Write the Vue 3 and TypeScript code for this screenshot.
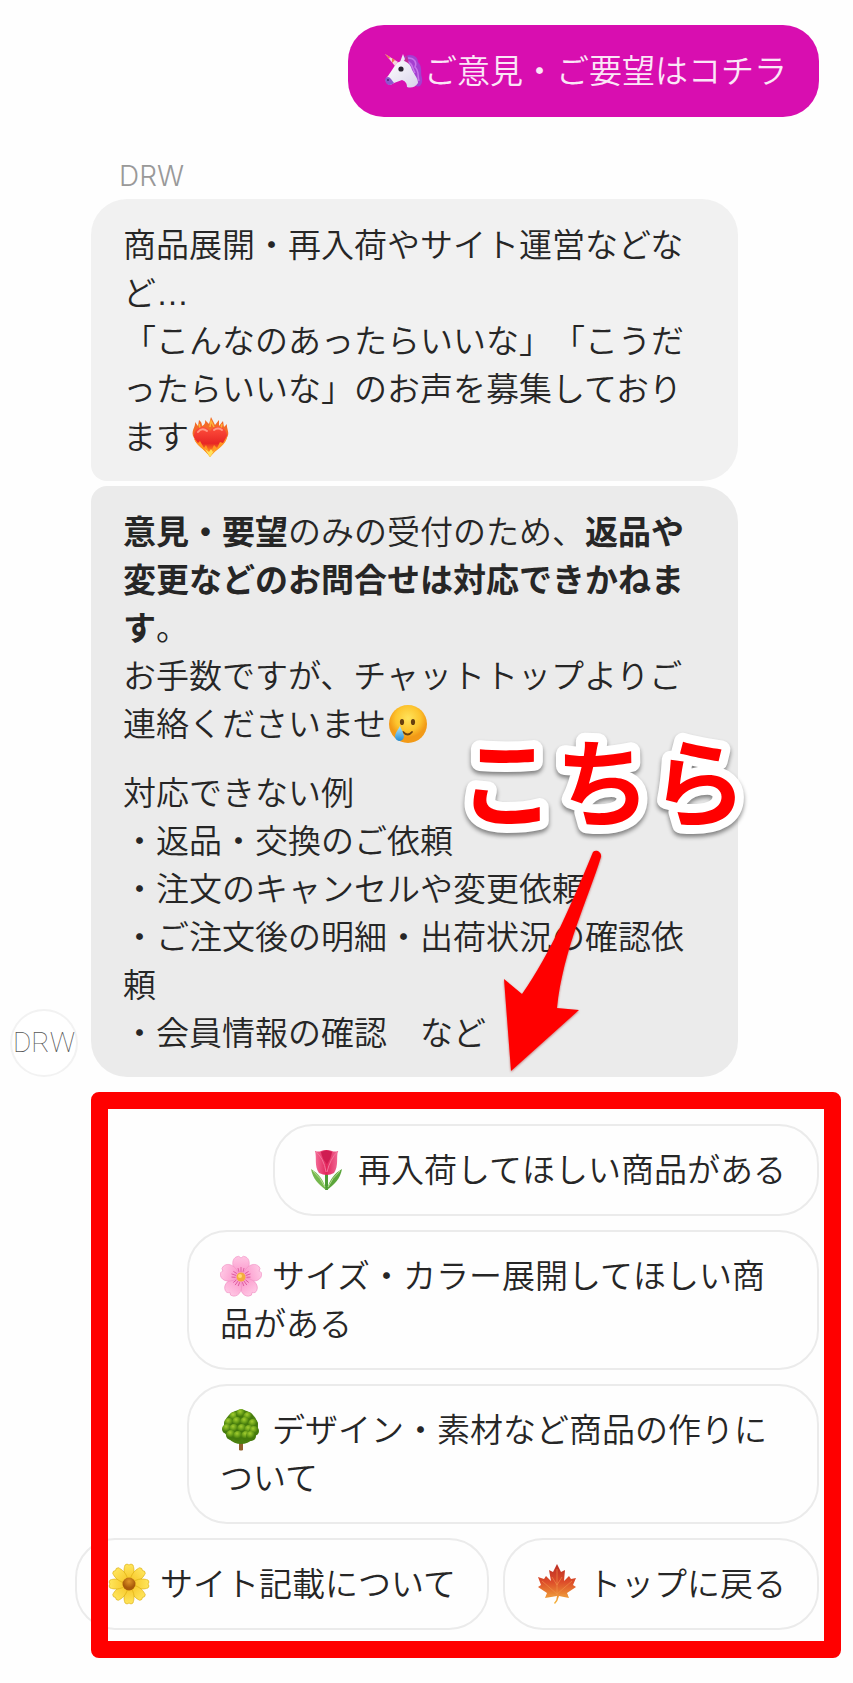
<script setup lang="ts">
import { defineComponent, h } from 'vue'

type IconName = 'unicorn' | 'heart' | 'face' | 'tulip' | 'blossom' | 'tree' | 'daisy' | 'maple'

interface Reply {
  icon: IconName
  label: string
}

const replies: Reply[] = [
  { icon: 'tulip', label: '再入荷してほしい商品がある' },
  { icon: 'blossom', label: 'サイズ・カラー展開してほしい商品がある' },
  { icon: 'tree', label: 'デザイン・素材など商品の作りについて' },
  { icon: 'daisy', label: 'サイト記載について' },
  { icon: 'maple', label: 'トップに戻る' },
]

const daisyPetals = Array.from({ length: 8 }, (_, i) =>
  `<path d="M21 20C14 12 16 5 17 2Q19 0 21 2Q23 0 25 2C26 5 28 12 21 20Z" fill="url(#dy)" stroke="#d9a90d" stroke-width=".6" transform="rotate(${i * 45} 21 21)"/>`,
).join('')

const blossomPetals = Array.from({ length: 5 }, (_, i) =>
  `<g transform="rotate(${i * 72} 21 22)"><path d="M21 21C11 14 11 5 16 2Q19 0 21 3Q23 0 26 2C31 5 31 14 21 21Z" fill="url(#bl)" stroke="#f08fc3" stroke-width=".6"/><path d="M21 17V12M19 17L18 13M23 17L24 13" stroke="#d6458f" stroke-width=".7" fill="none"/></g>`,
).join('')

const leafClumps = [
  [14, 8], [21, 5], [28, 8], [9, 14], [17, 13], [25, 13], [33, 15], [7, 20],
  [14, 20], [22, 20], [29, 21], [34, 22], [11, 26], [18, 27], [26, 27], [31, 27],
].map(([x, y]) => `<circle cx="${x}" cy="${y}" r="5" fill="url(#tr)"/>`).join('')

const art: Record<IconName, string> = {
  unicorn: `
    <defs><linearGradient id="un" x2="1" y2="1"><stop stop-color="#fff"/><stop offset="1" stop-color="#d9d3ea"/></linearGradient></defs>
    <path d="M21 8C28 2 36 6 36 12C41 17 38 22 40 28C41 34 38 38 34 36L23 17Z" fill="#a43fd0"/>
    <path d="M26 8C33 8 35 13 33 17C38 22 35 26 37 31M24 11C31 13 30 18 33 23" fill="none" stroke="#c872ea" stroke-width="1.5"/>
    <path d="M18 12L21 4L24 12Z" fill="#eee4f4"/><path d="M22 11L25 5L27 14Z" fill="#c22a99"/>
    <path d="M12 17C16 9 26 10 29 17C31 24 36 27 36 33Q32 39 25 37C25 33 23 31 20 30L12 33Q7 37 4 32Q3 29 6 26Z" fill="url(#un)"/>
    <path d="M3 29Q6 25 9 29L12 33Q7 37 4 33Z" fill="#8f55cf"/>
    <path d="M3 4L16 12L13 16Z" fill="#f5d3dc"/><path d="M3 4L8 7L7 9ZM10 8L13 10L10 13Z" fill="#ed7a50"/>
    <circle cx="19" cy="19" r="2.6" fill="#29232f"/><circle cx="6" cy="30" r="1" fill="#4d2470"/>`,
  heart: `
    <defs><linearGradient id="he" y2="1" x2="0"><stop stop-color="#ff503c"/><stop offset=".55" stop-color="#e82625"/><stop offset=".8" stop-color="#ff851c"/><stop offset="1" stop-color="#ffdc39"/></linearGradient></defs>
    <path d="M5 22C1 15 7 11 6 6L9 10L10 4Q13 6 13 10Q17 8 16 4L20 8L22 1L26 9L30 4V10L34 5L35 11L38 8C37 13 42 17 37 23Z" fill="#f36a28"/>
    <path d="M21 11L22 5L25 11M11 12L10 8M32 12L33 8" fill="none" stroke="#ffb238" stroke-width="1.5"/>
    <path d="M21 15C15 7 4 12 5 21C6 29 16 33 21 41C26 33 37 29 38 20C38 11 27 7 21 15Z" fill="url(#he)"/>
    <path d="M5 22L9 27L11 25L15 32L17 29L21 38L25 29L28 32L31 26L34 27L38 20C38 29 27 33 21 41C16 33 6 29 5 22Z" fill="#ff9623"/>
    <path d="M16 33L20 36L22 33L24 36L27 32L21 41Z" fill="#ffe25a"/>
    <path d="M9 16Q13 11 18 15M25 14Q29 11 33 14" stroke="#ff9784" stroke-width="2" fill="none" stroke-linecap="round"/>`,
  face: `
    <defs><radialGradient id="fa" cy=".35"><stop stop-color="#ffe45c"/><stop offset=".65" stop-color="#fdc52e"/><stop offset="1" stop-color="#f29a17"/></radialGradient><linearGradient id="te" x2="0" y2="1"><stop stop-color="#b2e9ff"/><stop offset="1" stop-color="#258ed7"/></linearGradient></defs>
    <circle cx="22" cy="21" r="19" fill="url(#fa)"/>
    <ellipse cx="16" cy="19" rx="2.1" ry="3.1" fill="#68400e"/><ellipse cx="27" cy="19" rx="2.1" ry="3.1" fill="#68400e"/>
    <path d="M17 29Q22 34 26 29" fill="none" stroke="#68400e" stroke-width="1.8" stroke-linecap="round"/>
    <path d="M14 23C12 27 9 30 9 34Q10 38 14 38Q18 37 18 33C17 28 15 26 14 23Z" fill="url(#te)"/>`,
  tulip: `
    <defs><linearGradient id="tu" x2="1" y2="0"><stop stop-color="#f46d99"/><stop offset=".5" stop-color="#e3265c"/><stop offset="1" stop-color="#f06a97"/></linearGradient></defs>
    <path d="M19 25H22V41H19Z" fill="#4d9b36"/>
    <path d="M20 41C18 31 12 24 5 20C7 30 12 35 20 41Z" fill="#76b84e"/>
    <path d="M21 41C23 31 29 24 36 20C34 30 29 35 21 41Z" fill="#5ba53b"/>
    <path d="M7 22Q15 29 19 38M34 22Q26 29 22 38" stroke="#b7dd91" fill="none"/>
    <path d="M9 2Q13 3 15 2Q20 0 26 2Q28 3 32 2C30 8 33 17 28 24Q21 28 13 24C8 17 11 9 9 2Z" fill="url(#tu)"/>
    <path d="M15 3Q21 0 26 3Q25 10 21 15Q16 10 15 3Z" fill="#cf1d52"/>
    <path d="M9 2Q18 9 20 23M32 2Q24 10 21 23" stroke="#f2769c" fill="none"/>`,
  blossom: `
    <defs><linearGradient id="bl" x2="0" y2="1"><stop stop-color="#ffc7e4"/><stop offset="1" stop-color="#fa92c8"/></linearGradient></defs>
    ${blossomPetals}<circle cx="21" cy="22" r="4.5" fill="#f4ac3e"/><circle cx="20" cy="21" r="2" fill="#ffda75"/>`,
  tree: `
    <defs><radialGradient id="tr" cx=".4" cy=".25"><stop stop-color="#a3cd30"/><stop offset=".6" stop-color="#699f18"/><stop offset="1" stop-color="#447a0c"/></radialGradient></defs>
    <path d="M19 29H23V41Q21 42 19 41Z" fill="#92602c"/>
    <circle cx="21" cy="18" r="17" fill="#4b800f"/>${leafClumps}`,
  daisy: `
    <defs><linearGradient id="dy" x2="0" y2="1"><stop stop-color="#ffe65d"/><stop offset="1" stop-color="#f6c321"/></linearGradient><radialGradient id="dc" cy=".3"><stop stop-color="#e19628"/><stop offset="1" stop-color="#a95a0a"/></radialGradient></defs>
    ${daisyPetals}<circle cx="21" cy="21" r="6.5" fill="url(#dc)"/>`,
  maple: `
    <defs><linearGradient id="ma" x2="0" y2="1"><stop stop-color="#bb2c24"/><stop offset=".45" stop-color="#dd4d2a"/><stop offset="1" stop-color="#f5b83b"/></linearGradient></defs>
    <path d="M21 1L25 9L29 7L28 18L33 13L35 16L40 15L37 22L40 24L31 30L33 35L23 33Q22 38 19 41L18 40Q21 37 21 33L9 35L11 30L2 24L5 22L2 14L8 16L10 13L15 18L13 7L17 9Z" fill="url(#ma)"/>
    <path d="M21 33V6M21 31L6 18M21 31L36 18M21 32L11 32M21 32L32 32M21 22L16 14M21 22L26 14" fill="none" stroke="#f0944a" stroke-width=".6"/>`,
}

const Emoji = defineComponent({
  props: { name: { type: String, required: true } },
  setup(props) {
    return () =>
      h('svg', {
        viewBox: '0 0 42 42',
        'aria-hidden': 'true',
        innerHTML: art[props.name as IconName],
      })
  },
})
</script>

<template>
  <main class="chat">
    <div class="bubble sent"><Emoji name="unicorn" class="emoji" />ご意見・ご要望はコチラ</div>

    <section class="received" aria-label="DRW">
      <div class="avatar" aria-hidden="true">DRW</div>
      <div class="thread">
        <p class="sender">DRW</p>
        <div class="bubble first">
          商品展開・再入荷やサイト運営などなど…<br />「こんなのあったらいいな」「こうだったらいいな」のお声を募集しております<Emoji name="heart" class="emoji" />
        </div>
        <div class="bubble last">
          <p><b>意見・要望</b>のみの受付のため、<b>返品や変更などのお問合せは対応できかねます</b>。<br />お手数ですが、チャットトップよりご連絡くださいませ<Emoji name="face" class="emoji" /></p>
          <p>対応できない例<br />・返品・交換のご依頼<br />・注文のキャンセルや変更依頼<br />・ご注文後の明細・出荷状況の確認依頼<br />・会員情報の確認　など</p>
          <svg class="callout" viewBox="0 0 290 400">
            <text class="callout-text" x="14" y="99">こちら</text>
            <path
              class="callout-arrow"
              d="M148 132C151 129 157 132 156 137C143 179 118 230 112 288L134 290L66 351L59 259L77 274C105 235 129 178 148 132Z"
            />
          </svg>
        </div>
      </div>
    </section>

    <section class="replies">
      <button v-for="reply in replies" :key="reply.icon" type="button" class="reply">
        <Emoji :name="reply.icon" class="emoji spaced" />{{ reply.label }}
      </button>
      <div class="frame"></div>
    </section>
  </main>
</template>

<style>
body {
  margin: 0;
  background: #fefefe;
}
</style>

<style scoped>
.chat {
  padding: 25px 34px 54px 10px;
  overflow: hidden;
  color: #262626;
  font-family: "Liberation Sans", "Noto Sans CJK JP", sans-serif;
  font-size: 33px;
  font-weight: 350;
  line-height: 48px;
  line-break: loose;
  word-break: break-all;
  text-spacing-trim: space-all;
}

p {
  margin: 0;
}

.bubble {
  box-sizing: border-box;
  padding: 23px 33px 19px 32px;
  border-radius: 36px;
}

.sent {
  width: fit-content;
  margin-left: auto;
  padding: 23px 32px 21px 34px;
  background: #d80eb0;
  color: #fbe6f7;
}

.emoji {
  display: inline-block;
  width: 42px;
  height: 42px;
  vertical-align: -9px;
}

.spaced {
  margin-right: 10px;
}

.received {
  display: flex;
  align-items: flex-end;
  gap: 13px;
  margin-top: 43px;
}

.avatar {
  box-sizing: border-box;
  flex: none;
  display: flex;
  align-items: center;
  justify-content: center;
  width: 68px;
  height: 68px;
  border: 2px solid #f2f2f2;
  border-radius: 50%;
  background: #fff;
  color: #555;
  font-family: "Liberation Sans Narrow", Roboto, sans-serif;
  font-size: 28px;
  font-weight: 100;
  word-break: normal;
}

.thread {
  flex: 1;
  max-width: 647px;
}

.sender {
  margin: 0 0 7px 28px;
  color: #999;
  font-family: Inter, sans-serif;
  font-size: 28px;
  font-weight: 350;
  line-height: 32px;
}

.first {
  border-bottom-left-radius: 16px;
  background: #f1f1f1;
}

.last {
  position: relative;
  margin-top: 5px;
  border-top-left-radius: 16px;
  background: #ebebeb;
}

.last p + p {
  margin-top: 21px;
}

b {
  font-weight: 700;
}

.callout {
  position: absolute;
  top: 234px;
  right: 3px;
  width: 290px;
  height: 400px;
  overflow: visible;
}

.callout-text {
  fill: #f00;
  stroke: #fff;
  stroke-width: 18px;
  stroke-linejoin: round;
  paint-order: stroke;
  font-size: 96px;
  font-weight: 700;
  filter: drop-shadow(0 3px 2px rgb(0 0 0 / 45%));
}

.callout-arrow {
  fill: #f00;
  filter: drop-shadow(0 1px 1px rgb(160 0 0 / 50%));
}

.replies {
  position: relative;
  display: flex;
  flex-wrap: wrap;
  justify-content: flex-end;
  gap: 14px;
  margin-top: 47px;
}

.reply {
  max-width: 632px;
  padding: 21px 31px 19px;
  border: 2px solid #ebebeb;
  border-radius: 40px;
  background: #fefefe;
  color: inherit;
  font: inherit;
  line-break: inherit;
  word-break: inherit;
  text-align: left;
  cursor: pointer;
}

.frame {
  position: absolute;
  inset: -32px -22px -28px 81px;
  border: 17px solid #f00;
  border-radius: 8px;
  pointer-events: none;
}
</style>
